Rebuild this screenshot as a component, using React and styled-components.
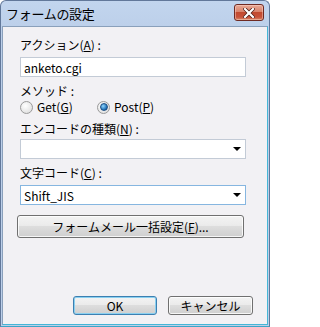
import React from 'react';
import styled, { createGlobalStyle } from 'styled-components';

const GlobalStyle = createGlobalStyle`
  body {
    margin: 0;
    background: #ffffff;
    font-family: 'Noto Sans CJK JP', 'Liberation Sans', sans-serif;
  }
`;

const Window = styled.div`
  width: 270px;
  height: 327px;
  box-sizing: border-box;
  display: flex;
  flex-direction: column;
  background: linear-gradient(#c2d5ee, #bccfe9 30px);
  border: 1px solid #62789a;
  border-bottom-color: #3aa6c8;
  border-radius: 6px 6px 0 0;
`;

const TitleBar = styled.div`
  height: 25px;
  flex: none;
  display: flex;
  align-items: center;
  justify-content: space-between;
  padding: 0 5px 0 5px;
`;

const Title = styled.span`
  font-size: 13px;
  line-height: 15px;
  color: #000;
  letter-spacing: -0.3px;
`;

const CloseButton = styled.div`
  width: 28px;
  height: 15px;
  margin-top: -2px;
  border: 1px solid #6f2a22;
  border-radius: 3px;
  background: linear-gradient(#e9a996, #d9836c 45%, #c24a2f 50%, #c8513a 80%, #d88a68);
  box-shadow: inset 0 0 0 1px rgba(255, 220, 210, 0.45);
  display: flex;
  align-items: center;
  justify-content: center;
`;

const Client = styled.div`
  flex: 1;
  margin: 0 1px 1px 1px;
  box-sizing: border-box;
  border: 1px solid #8aa0bb;
  border-bottom-color: #45b6d6;
  border-right-color: #45b6d6;
  background: #f2f1f4;
  display: flex;
  flex-direction: column;
  padding: 11px 0 9px 17px;
`;

const Label = styled.div`
  font-size: 12px;
  line-height: 14px;
  color: #000;
  margin-top: ${p => p.$top || 0}px;
  u {
    text-decoration: underline;
    text-underline-offset: 1px;
  }
`;

const Field = styled.div`
  width: 226px;
  height: 20px;
  box-sizing: border-box;
  margin-top: ${p => p.$top || 0}px;
  background: #fff;
  border: 1px solid ${p => (p.$focus ? '#86b6e0' : '#c3cbd6')};
  display: flex;
  align-items: center;
  justify-content: space-between;
  padding: 0 4px 0 3px;
  font-size: 12px;
  color: #000;
`;

const Arrow = styled.span`
  width: 0;
  height: 0;
  border-left: 4px solid transparent;
  border-right: 4px solid transparent;
  border-top: 4px solid #000;
`;

const RadioRow = styled.div`
  display: flex;
  align-items: center;
  height: 14px;
  margin-top: 2px;
`;

const RadioItem = styled.label`
  display: flex;
  align-items: center;
  gap: 4px;
  width: ${p => p.$width}px;
  font-size: 12px;
  line-height: 14px;
  u {
    text-underline-offset: 1px;
  }
`;

const RadioDot = styled.span`
  width: 11px;
  height: 11px;
  border-radius: 50%;
  border: 1px solid #9a9a9a;
  background: radial-gradient(circle at 40% 35%, #ffffff, #d8d8d8);
  display: flex;
  align-items: center;
  justify-content: center;
  &::after {
    content: '';
    display: ${p => (p.$checked ? 'block' : 'none')};
    width: 6px;
    height: 6px;
    border-radius: 50%;
    background: radial-gradient(circle at 35% 35%, #8fd6ff, #1a6ab0 70%, #0c3f7a);
    border: 1px solid #1d4f84;
  }
`;

const Button = styled.div`
  box-sizing: border-box;
  width: ${p => p.$width}px;
  height: ${p => p.$height}px;
  margin-left: ${p => p.$left || 0}px;
  margin-top: ${p => p.$top || 0}px;
  border: 1px solid ${p => (p.$default ? '#3c7fb1' : '#707070')};
  border-radius: 3px;
  background: linear-gradient(#f3f3f3, #ebebeb 45%, #dddddd 50%, #cfcfcf);
  box-shadow: inset 0 0 0 1px ${p => (p.$default ? '#8ad0f0' : 'rgba(255,255,255,0.8)')};
  display: flex;
  align-items: center;
  justify-content: center;
  font-size: 12px;
  line-height: 14px;
  color: #000;
  u {
    text-underline-offset: 1px;
  }
`;

const Footer = styled.div`
  margin-top: auto;
  display: flex;
  justify-content: flex-end;
  gap: 11px;
  padding-right: 14px;
`;

const App = () => (
  <>
    <GlobalStyle />
    <Window>
      <TitleBar>
        <Title>フォームの設定</Title>
        <CloseButton>
          <svg width="12" height="10" viewBox="0 0 12 10">
            <path
              d="M2 1 L10 9 M10 1 L2 9"
              stroke="#4a1a14"
              strokeWidth="3.6"
              strokeLinecap="square"
            />
            <path
              d="M2 1 L10 9 M10 1 L2 9"
              stroke="#ffffff"
              strokeWidth="2.2"
              strokeLinecap="square"
            />
          </svg>
        </CloseButton>
      </TitleBar>
      <Client>
        <Label>
          アクション(<u>A</u>) :
        </Label>
        <Field $top={5}>anketo.cgi</Field>
        <Label $top={7}>メソッド :</Label>
        <RadioRow>
          <RadioItem $width={77}>
            <RadioDot />
            <span>
              Get(<u>G</u>)
            </span>
          </RadioItem>
          <RadioItem $width={80}>
            <RadioDot $checked />
            <span>
              Post(<u>P</u>)
            </span>
          </RadioItem>
        </RadioRow>
        <Label $top={8}>
          エンコードの種類(<u>N</u>) :
        </Label>
        <Field $top={3}>
          <span />
          <Arrow />
        </Field>
        <Label $top={7}>
          文字コード(<u>C</u>) :
        </Label>
        <Field $top={5} $focus>
          <span>Shift_JIS</span>
          <Arrow />
        </Field>
        <Button $width={227} $height={23} $left={-3} $top={10}>
          フォームメール一括設定(<u>F</u>)...
        </Button>
        <Footer>
          <Button $width={84} $height={19} $default>
            OK
          </Button>
          <Button $width={85} $height={19}>
            キャンセル
          </Button>
        </Footer>
      </Client>
    </Window>
  </>
);

export default App;
